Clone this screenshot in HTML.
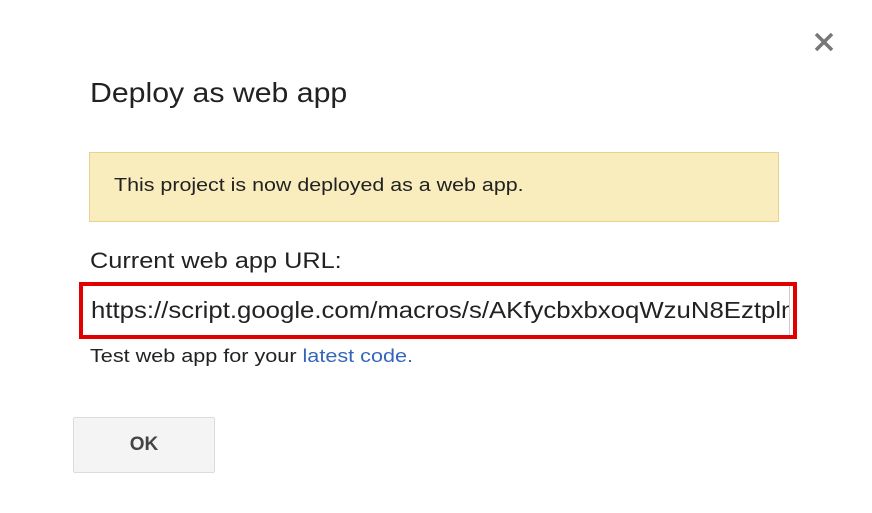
<!DOCTYPE html>
<html><head><style>
body{margin:0;width:872px;height:513px;background:#fff;position:relative;overflow:hidden;font-family:"Liberation Sans",Arial,sans-serif;color:#222}
div{position:absolute}
.s{transform-origin:left center;white-space:nowrap}
</style></head><body>
<div style="left:812px;top:30px;width:24px;height:24px">
<svg width="24" height="24" viewBox="0 0 24 24"><path d="M4 4L20 20M20 4L4 20" stroke="#777" stroke-width="3.5"/></svg></div>
<div class="s" style="left:90px;top:77px;font-size:28px;color:#222;transform:scaleX(1.08)">Deploy as web app</div>
<div style="left:89px;top:152px;width:688px;height:68px;background:#f9edbe;border:1px solid #e8d28f"></div>
<div class="s" style="left:114px;top:175px;font-size:18px;color:#222;transform:scaleX(1.19)">This project is now deployed as a web app.</div>
<div class="s" style="left:90px;top:248px;font-size:22px;color:#222;transform:scaleX(1.15)">Current web app URL:</div>
<div style="left:79px;top:282px;width:710px;height:49px;border:4px solid #e00000;background:#fff"></div>
<div style="left:83px;top:286px;width:706px;height:49px;border-right:1px solid #ccc;overflow:hidden">
<div class="s" style="left:8px;top:0;font-size:23px;line-height:49px;color:#222;transform:scaleX(1.12)">https://script.google.com/macros/s/AKfycbxbxoqWzuN8EztplmQ</div></div>
<div class="s" style="left:90px;top:346px;font-size:18px;color:#222;transform:scaleX(1.2)">Test web app for your <span style="color:#3366bb">latest code.</span></div>
<div style="left:73px;top:417px;width:140px;height:54px;background:#f4f4f4;border:1px solid #dcdcdc;border-radius:2px;text-align:center;line-height:54px;font-size:19px;font-weight:bold;color:#444">OK</div>
</body></html>
